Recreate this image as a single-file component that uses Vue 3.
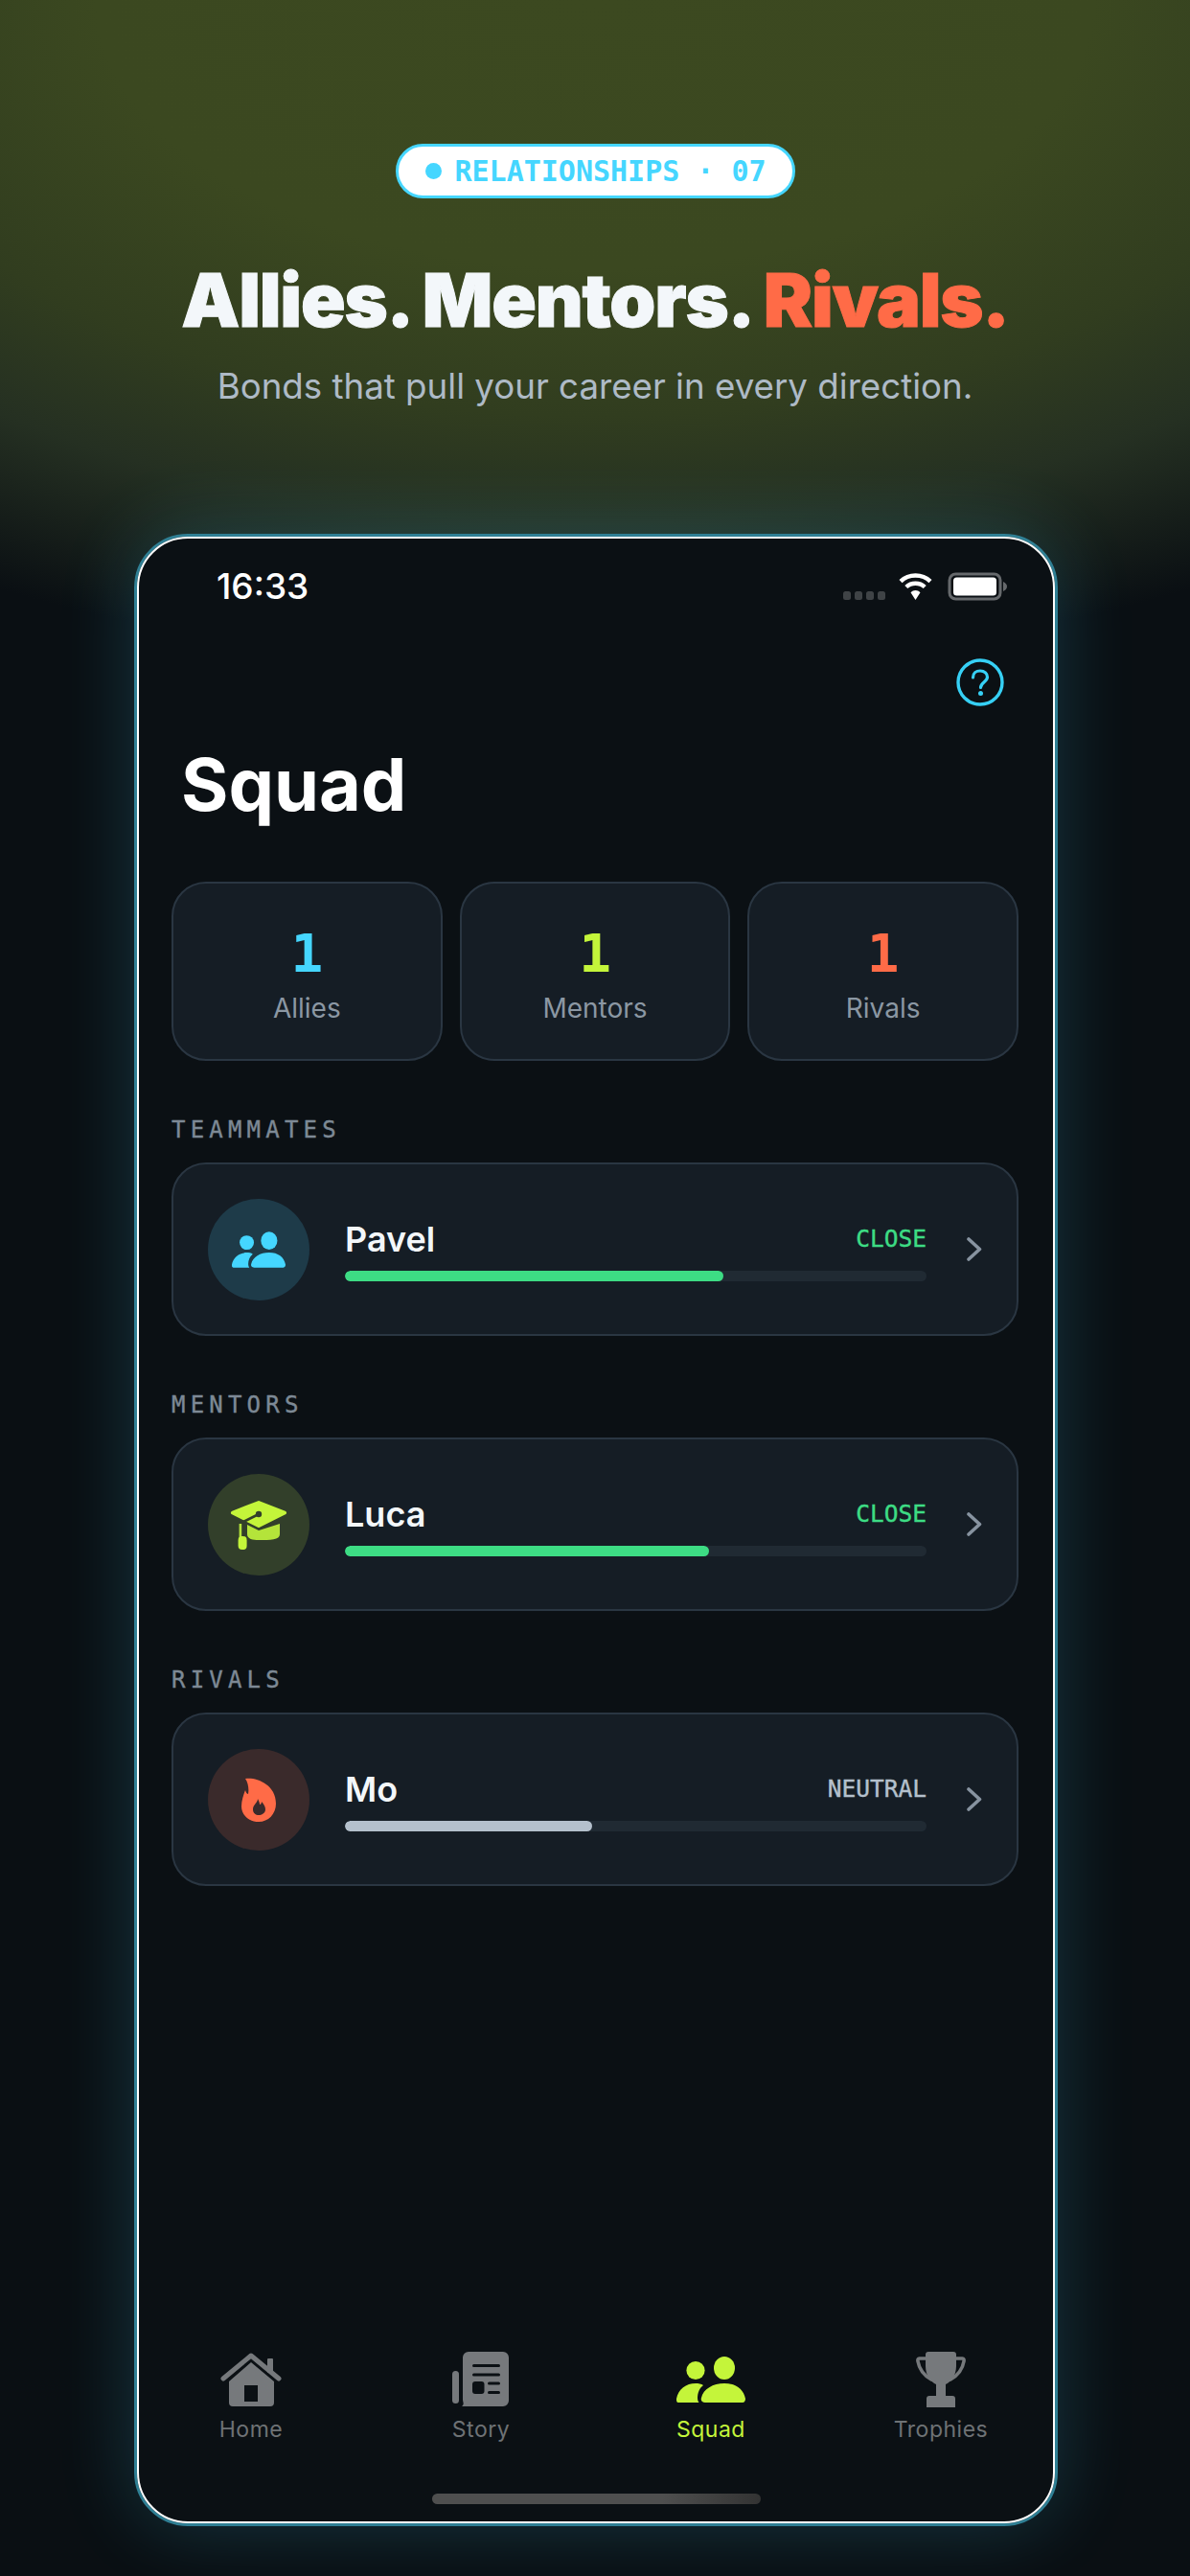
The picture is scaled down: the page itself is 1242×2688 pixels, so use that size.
<script setup>
const stats = [
  { n: 1, label: 'Allies', color: '#45d6ff' },
  { n: 1, label: 'Mentors', color: '#c4f53a' },
  { n: 1, label: 'Rivals', color: '#ff6b47' },
]
const sections = [
  { title: 'TEAMMATES', name: 'Pavel', tier: 'CLOSE', tierColor: '#3ddc84', pct: 65, barColor: '#3ddc84', icon: 'people', avatar: '#1e3b49' },
  { title: 'MENTORS', name: 'Luca', tier: 'CLOSE', tierColor: '#3ddc84', pct: 62.6, barColor: '#3ddc84', icon: 'cap', avatar: '#323f2a' },
  { title: 'RIVALS', name: 'Mo', tier: 'NEUTRAL', tierColor: '#b4c0cc', pct: 42.5, barColor: '#b4c0cc', icon: 'fire', avatar: '#3a2a2b' },
]
</script>

<template>
  <div class="page">
    <header class="hero">
      <div class="pill"><span class="pill-dot"></span><span>RELATIONSHIPS · 07</span></div>
      <h1 class="headline">Allies. Mentors. <span class="rivals">Rivals.</span></h1>
      <p class="sub">Bonds that pull your career in every direction.</p>
    </header>

    <div class="phone">
      <div class="screen">
        <div class="status">
          <span class="time">16:33</span>
          <svg class="status-icons" width="171" height="30" viewBox="0 0 171 30">
            <g fill="#3f4346">
              <rect x="0" y="20" width="8" height="9" rx="2.5" />
              <rect x="12" y="20" width="8" height="9" rx="2.5" />
              <rect x="24" y="20" width="8" height="9" rx="2.5" />
              <rect x="36" y="20" width="8" height="9" rx="2.5" />
            </g>
            <g fill="none" stroke="#fff" stroke-width="4.4">
              <path d="M60 9.6 C68.5 1.5 82.5 1.5 91 9.6" />
              <path d="M65.8 15.5 C71.2 10.4 79.8 10.4 85.2 15.5" />
            </g>
            <path d="M70.5 21.2 C73.5 18.4 77.5 18.4 80.5 21.2 L75.5 29 Z" fill="#fff" />
            <rect x="111" y="2" width="53" height="26" rx="6.5" fill="none" stroke="#66696c" stroke-width="3" />
            <rect x="115" y="5.5" width="45" height="19" rx="3.5" fill="#fff" />
            <path d="M167 10 C169.5 11 171 13 171 15 C171 17 169.5 19 167 20 Z" fill="#66696c" />
          </svg>
        </div>

        <div class="help-row">
          <svg width="50" height="50" viewBox="0 0 50 50" fill="none">
            <circle cx="25" cy="25" r="23" stroke="#36d0f5" stroke-width="3.4" />
            <path d="M17.5 20 C17.5 15.5 21 13 25 13 C29.5 13 32.5 16 32.5 19.5 C32.5 24.5 25.5 25 25.5 30.5" stroke="#36d0f5" stroke-width="3.2" stroke-linecap="round" />
            <circle cx="25.5" cy="36.5" r="2.5" fill="#36d0f5" />
          </svg>
        </div>

        <h2 class="title">Squad</h2>

        <div class="stats">
          <div v-for="s in stats" :key="s.label" class="stat">
            <div class="stat-n" :style="{ color: s.color }">{{ s.n }}</div>
            <div class="stat-l">{{ s.label }}</div>
          </div>
        </div>

        <section v-for="r in sections" :key="r.title" class="section">
          <div class="section-title">{{ r.title }}</div>
          <div class="row">
            <div class="avatar" :style="{ background: r.avatar }">
              <svg v-if="r.icon === 'people'" width="56" height="38" viewBox="0 0 72 48" fill="#45d6ff">
                <ellipse cx="50" cy="12" rx="11" ry="12" />
                <circle cx="20" cy="14.5" r="9.6" />
                <path d="M30 48 C27 48 25 46 26 43 C28 34 38 28 50 28 C62 28 70 34 72 44 C72 46 71 48 69 48 Z" />
                <path d="M2 48 C0 48 0 46 0 44 C2 34 10 28 20 28 C23 28 26 28.5 28 30 C24 33 22 38 22 43 C22 45 22.5 47 23.5 48 Z" />
              </svg>
              <svg v-else-if="r.icon === 'cap'" width="60" height="52" viewBox="0 0 60 52">
                <path d="M18 26 L30 32 L52 25 V36 C52 42 42 42 30 42 C24 42 18 41 18 36 Z" fill="#b4e43a" />
                <path d="M30 3 L57 13.5 L30 27 L3 13.5 Z" fill="#c4f53a" stroke="#c4f53a" stroke-width="4" stroke-linejoin="round" />
                <path d="M30 15 L12 24" stroke="#323f2a" stroke-width="2.6" stroke-linecap="round" />
                <circle cx="30" cy="15" r="3.2" fill="#323f2a" />
                <rect x="9.6" y="25" width="2.6" height="16" fill="#b4e43a" />
                <rect x="8.6" y="38" width="9" height="14" rx="4" fill="#c4f53a" />
              </svg>
              <svg v-else width="36" height="46" viewBox="0 0 36 46">
                <path fill="#ff6b47" fill-rule="evenodd" d="M4 1 C14 -1 36 6 36 27 C36 38 28 46 18 46 C8 46 0 39 0 30 C0 24 2 18 4 13 C5 16 6 17 7 17 C8 12 7 5 4 1 Z M17 22 C17 26 12 28 12 33 C12 37 15 39 18 39 C21 39 25 37 25 33 C25 30 23 27 21 25 C21 27 20 28 19 28 C19 26 18 24 17 22 Z" />
              </svg>
            </div>
            <div class="row-main">
              <div class="row-head">
                <span class="name">{{ r.name }}</span>
                <span class="tier" :style="{ color: r.tierColor }">{{ r.tier }}</span>
              </div>
              <div class="track"><div class="fill" :style="{ width: r.pct + '%', background: r.barColor }"></div></div>
            </div>
            <svg class="chev" width="16" height="25" viewBox="0 0 16 25" fill="none">
              <path d="M2 2 L13.5 12.5 L2 23" stroke="#8793a0" stroke-width="3.6" stroke-linecap="round" stroke-linejoin="round" />
            </svg>
          </div>
        </section>

        <nav class="tabs">
          <div class="tab">
            <svg width="64" height="58" viewBox="0 0 64 58" fill="#76797c">
              <rect x="49" y="7" width="6" height="15" rx="1" />
              <path d="M3 28 L32 4 L61 28" fill="none" stroke="#76797c" stroke-width="5" stroke-linecap="round" stroke-linejoin="round" />
              <path fill-rule="evenodd" d="M32 11 L56 31 V53 a4 4 0 0 1 -4 4 H13 a4 4 0 0 1 -4 -4 V31 Z M25 35 V52 H39 V35 Z" />
            </svg>
            <span>Home</span>
          </div>
          <div class="tab">
            <svg width="60" height="58" viewBox="0 0 60 58">
              <rect x="0" y="20" width="7" height="34" rx="3.5" fill="#76797c" />
              <path d="M17 0 H53 a6 6 0 0 1 6 6 V51 a6 6 0 0 1 -6 6 H10 C13 55 11 52 11 50 V6 a6 6 0 0 1 6 -6 Z" fill="#76797c" />
              <g fill="#0b1014">
                <rect x="21" y="13" width="29" height="3" rx="1.5" />
                <rect x="21" y="22.5" width="29" height="3" rx="1.5" />
                <rect x="21" y="31" width="12.5" height="13" rx="3" />
                <rect x="37" y="31.5" width="13" height="3" rx="1.5" />
                <rect x="37" y="41" width="13" height="3" rx="1.5" />
              </g>
            </svg>
            <span>Story</span>
          </div>
          <div class="tab active">
            <svg class="people-tab" width="72" height="48" viewBox="0 0 72 48" fill="#c4f53a">
              <ellipse cx="50" cy="12" rx="11" ry="12" />
              <circle cx="20" cy="14.5" r="9.6" />
              <path d="M30 48 C27 48 25 46 26 43 C28 34 38 28 50 28 C62 28 70 34 72 44 C72 46 71 48 69 48 Z" />
              <path d="M2 48 C0 48 0 46 0 44 C2 34 10 28 20 28 C23 28 26 28.5 28 30 C24 33 22 38 22 43 C22 45 22.5 47 23.5 48 Z" />
            </svg>
            <span>Squad</span>
          </div>
          <div class="tab">
            <svg width="52" height="58" viewBox="0 0 52 58" fill="#76797c">
              <path d="M11 7 H3.5 Q1.5 7 2 10 C3.5 19 9 25 16 29" fill="none" stroke="#76797c" stroke-width="3.6" stroke-linecap="round" />
              <path d="M41 7 H48.5 Q50.5 7 50 10 C48.5 19 43 25 36 29" fill="none" stroke="#76797c" stroke-width="3.6" stroke-linecap="round" />
              <path d="M13 0 H39 Q42 0 42 3 V15 C42 25 36 32 31 34 V46 H38 Q41 46 41 49 V58 H11 V49 Q11 46 14 46 H21 V34 C16 32 10 25 10 15 V3 Q10 0 13 0 Z" />
            </svg>
            <span>Trophies</span>
          </div>
        </nav>
        <div class="home-indicator"></div>
      </div>
    </div>
  </div>
</template>

<style scoped>
.page {
  position: relative;
  width: 1242px;
  height: 2688px;
  overflow: hidden;
  padding-top: 150px;
  box-sizing: border-box;
  background:
    radial-gradient(ellipse 1300px 700px at 50% 0, #3c4920 0%, #3b4820 40%, #313d1f 62%, #253022 78%, rgba(10, 15, 19, 0) 100%),
    #0a0f13;
  font-family: Inter, "Liberation Sans", sans-serif;
}
.hero {
  display: flex;
  flex-direction: column;
  align-items: center;
}
.pill {
  display: flex;
  align-items: center;
  gap: 14px;
  box-sizing: border-box;
  height: 57px;
  width: 417px;
  padding-left: 28px;
  background: #fff;
  border: 3px solid #45d6ff;
  border-radius: 29px;
  color: #45d6ff;
  font-family: "DejaVu Sans Mono", "Liberation Mono", monospace;
  font-weight: 700;
  font-size: 30px;
  white-space: nowrap;
}
.pill-dot {
  width: 17px;
  height: 17px;
  border-radius: 50%;
  background: #45d6ff;
  flex: none;
}
.headline {
  margin: 60px 0 0;
  font-size: 77px;
  line-height: 92px;
  font-weight: 900;
  letter-spacing: -1.2px;
  -webkit-text-stroke: 1px currentColor;
  color: #f3f7fa;
  white-space: nowrap;
}
.rivals { color: #ff6b47; }
.sub {
  margin: 21px 0 0;
  font-size: 36.7px;
  line-height: 46px;
  color: #aebac6;
  white-space: nowrap;
}
.phone {
  box-sizing: border-box;
  width: 964px;
  height: 2079px;
  margin: 131px 0 0 140px;
  border: 3px solid #2f7f94;
  border-radius: 56px;
  box-shadow: 0 0 80px rgba(69, 214, 255, 0.2);
}
.screen {
  box-sizing: border-box;
  height: 100%;
  display: flex;
  flex-direction: column;
  border: 2px solid #fff;
  border-radius: 53px;
  background: #0b1014;
  overflow: hidden;
}
.status {
  display: flex;
  justify-content: space-between;
  align-items: flex-start;
  height: 91px;
  box-sizing: border-box;
  padding: 28px 48px 0 81px;
}
.time {
  font-size: 37px;
  line-height: 44px;
  font-weight: 500;
  color: #fff;
}
.status-icons { margin-top: 7px; }
.help-row {
  display: flex;
  justify-content: flex-end;
  margin-top: 34px;
  padding-right: 51px;
}
.title {
  margin: 36px 0 0;
  padding-left: 44px;
  font-size: 75.5px;
  line-height: 92px;
  font-weight: 700;
  color: #fff;
}
.stats {
  display: grid;
  grid-template-columns: repeat(3, 1fr);
  gap: 18px;
  margin: 55px 36px 0 34px;
}
.stat {
  box-sizing: border-box;
  height: 187px;
  padding-top: 43px;
  text-align: center;
  background: #151d25;
  border: 2px solid #2a3642;
  border-radius: 36px;
}
.stat-n {
  font-family: "DejaVu Sans Mono", monospace;
  font-weight: 700;
  font-size: 56px;
  line-height: 60px;
}
.stat-l {
  margin-top: 10px;
  font-size: 28px;
  line-height: 34px;
  color: #8b97a3;
}
.section { margin: 57px 36px 0 34px; }
.section-title {
  font-family: "DejaVu Sans Mono", monospace;
  font-size: 24px;
  line-height: 30px;
  letter-spacing: 5.2px;
  -webkit-text-stroke: 0.4px currentColor;
  color: #7d8995;
}
.row {
  box-sizing: border-box;
  display: flex;
  align-items: center;
  height: 181px;
  margin-top: 19px;
  padding-left: 36px;
  background: #151d25;
  border: 2px solid #2a3642;
  border-radius: 36px;
}
.avatar {
  width: 106px;
  height: 106px;
  border-radius: 50%;
  display: flex;
  align-items: center;
  justify-content: center;
  flex: none;
}
.row-main {
  width: 607px;
  margin-left: 37px;
}
.row-head {
  display: flex;
  justify-content: space-between;
  align-items: flex-start;
}
.name {
  font-size: 36px;
  line-height: 46px;
  font-weight: 600;
  color: #f3f7fa;
}
.tier {
  margin-top: 8px;
  font-family: "DejaVu Sans Mono", monospace;
  font-size: 24.5px;
  line-height: 30px;
  -webkit-text-stroke: 0.4px currentColor;
}
.track {
  height: 11px;
  margin-top: 10px;
  border-radius: 6px;
  background: #202a33;
  overflow: hidden;
}
.fill {
  height: 100%;
  border-radius: 6px;
}
.chev { margin-left: 42px; }
.tabs {
  display: grid;
  grid-template-columns: repeat(4, 240px);
  margin: auto -3px 0;
}
.tab {
  display: flex;
  flex-direction: column;
  align-items: center;
  font-size: 23px;
  line-height: 30px;
  letter-spacing: 0.5px;
  color: #6e7275;
}
.tab svg { display: block; height: 58px; }
.tab span { margin-top: 8px; }
.tab.active { color: #c4f53a; }
.home-indicator {
  width: 343px;
  height: 11px;
  margin: 52px auto 18px;
  flex: none;
  border-radius: 6px;
  background: linear-gradient(90deg, #4f4f4f 70%, #333 100%);
}
</style>
